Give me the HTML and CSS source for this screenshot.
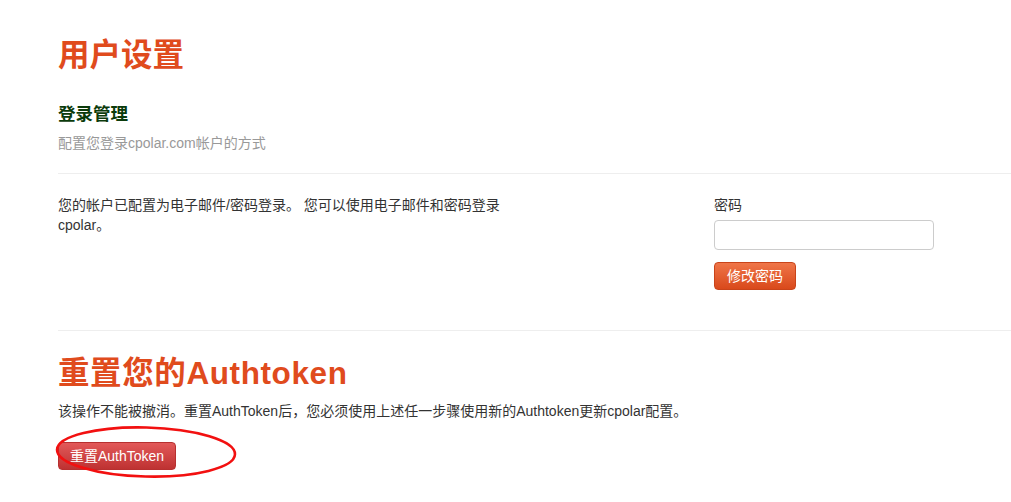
FILE: index.html
```html
<!DOCTYPE html>
<html lang="zh-CN">
<head>
<meta charset="utf-8">
<title>用户设置</title>
<link rel="stylesheet" href="styles.css">
</head>
<body>
<main class="page">
  <h1 class="title">用户设置</h1>
  <h2 class="section-title">登录管理</h2>
  <p class="subtitle">配置您登录cpolar.com帐户的方式</p>
  <hr class="divider">
  <div class="login-row">
    <div class="login-info">
      <p class="body-text">您的帐户已配置为电子邮件/密码登录。 您可以使用电子邮件和密码登录 cpolar。</p>
    </div>
    <form class="password-form">
      <label class="field-label" for="pwd">密码</label>
      <input class="field-input" id="pwd" type="password">
      <button class="btn btn-orange" type="button">修改密码</button>
    </form>
  </div>
  <hr class="divider divider-second">
  <h1 class="title title-second">重置您的Authtoken</h1>
  <p class="body-text reset-text">该操作不能被撤消。重置AuthToken后，您必须使用上述任一步骤使用新的Authtoken更新cpolar配置。</p>
  <div class="reset-wrap">
    <button class="btn btn-red" type="button">重置AuthToken</button>
    <svg class="annotation" width="190" height="60" viewBox="0 0 190 60">
      <ellipse cx="92" cy="26" rx="89" ry="24.5" fill="none" stroke="#f21010" stroke-width="2.6" transform="rotate(1.5 92 26)"/>
    </svg>
  </div>
</main>
</body>
</html>
```
FILE: styles.css
```css
* { box-sizing: border-box; }
html, body { margin: 0; padding: 0; background: #fff; }
body {
  font-family: "Liberation Sans", "Noto Sans CJK SC", sans-serif;
  color: #333;
  font-size: 14px;
}
.page {
  padding: 35px 0 30px 58px;
  overflow-x: hidden;
}
.title {
  margin: 0;
  font-family: "Liberation Sans", "Noto Sans CJK SC", sans-serif;
  font-size: 31.5px;
  line-height: 40px;
  font-weight: bold;
  color: #e04b1d;
}
.section-title {
  margin: 26px 0 0;
  font-family: "Noto Sans CJK SC", sans-serif;
  font-size: 17.5px;
  line-height: 24px;
  font-weight: bold;
  color: #0b3b0b;
}
.subtitle {
  margin: 8px 0 0;
  font-size: 14px;
  line-height: 20px;
  color: #999;
}
.divider {
  margin: 20px 0 0;
  border: 0;
  border-top: 1px solid #eee;
  height: 0;
}
.login-row {
  display: flex;
  padding-top: 21px;
}
.login-info {
  width: 470px;
  margin-right: 186px;
}
.body-text {
  margin: 0;
  font-size: 14px;
  line-height: 20px;
  color: #333;
}
.password-form {
  display: flex;
  flex-direction: column;
  align-items: flex-start;
}
.field-label {
  font-size: 14px;
  line-height: 20px;
  color: #333;
}
.field-input {
  margin-top: 5px;
  width: 220px;
  height: 30px;
  border: 1px solid #ccc;
  border-radius: 4px;
  background: #fff;
}
.btn {
  height: 28px;
  border-radius: 4px;
  color: #fff;
  font-family: "Liberation Sans", "Noto Sans CJK SC", sans-serif;
  font-size: 14px;
  line-height: 26px;
  padding: 0;
  text-align: center;
  cursor: pointer;
}
.btn-orange {
  margin-top: 12px;
  width: 82px;
  border: 1px solid #c9441a;
  background: linear-gradient(#ef7548, #d9491b);
}
.divider-second { margin-top: 40px; }
.title-second {
  margin-top: 22px;
  letter-spacing: 0.6px;
}
.reset-text { margin-top: 8px; }
.reset-wrap {
  position: relative;
  margin-top: 21px;
  height: 28px;
}
.btn-red {
  width: 118px;
  border: 1px solid #b73030;
  background: linear-gradient(#e25959, #be3232);
}
.annotation {
  position: absolute;
  left: -4px;
  top: -16px;
  overflow: visible;
  pointer-events: none;
}
```
